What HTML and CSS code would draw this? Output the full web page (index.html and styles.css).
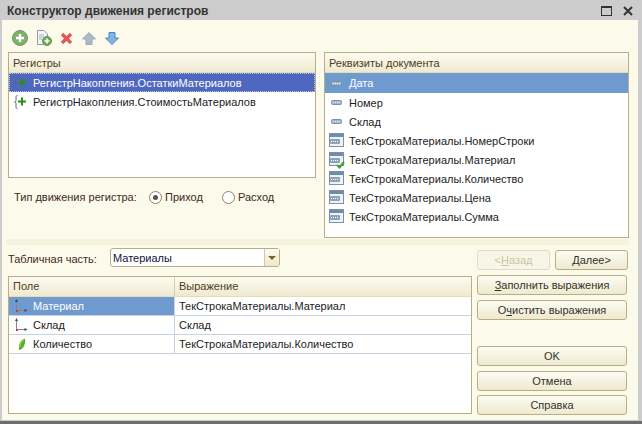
FILE: index.html
```html
<!DOCTYPE html>
<html lang="ru">
<head>
  <meta charset="UTF-8">
  <title>Конструктор движения регистров</title>
  <link rel="stylesheet" href="styles.css">
</head>
<body>
<svg class="defs" width="0" height="0">
  <symbol id="i-attr" viewBox="0 0 11 5">
    <rect x="0.5" y="0.5" width="10" height="4" rx="1" fill="#9fb5ca" stroke="#7c93aa"/>
    <path d="M2 2.5h1M4 2.5h1M6 2.5h1M8 2.5h1" stroke="#eef4f9" stroke-width="1"/>
  </symbol>
  <symbol id="i-tab" viewBox="0 0 15 15">
    <rect x="0.5" y="0.5" width="14" height="13" fill="#eef3f8" stroke="#7d92a8"/>
    <rect x="1" y="1" width="13" height="3" fill="#6f8dab"/>
    <rect x="1" y="6" width="10" height="5" rx="1" fill="#8ea3b8"/>
    <path d="M2 8.5h1M4 8.5h1M6 8.5h1M8 8.5h1" stroke="#fff"/>
  </symbol>
  <symbol id="i-reg" viewBox="0 0 14 14">
    <path d="M3.5 0.5C2 0.5 2 1.5 2 3V5.5C2 6.5 1.5 7 0.5 7C1.5 7 2 7.5 2 8.5V11C2 12.5 2 13.5 3.5 13.5" fill="none" stroke="#5a6b80"/>
    <path d="M8 2.5V10.5M4 6.5H12" stroke="#2f8a17" stroke-width="2"/>
  </symbol>
  <symbol id="i-dim" viewBox="0 0 14 16">
    <path d="M2.5 3V12.5H11" fill="none" stroke="#80878f"/>
    <path d="M1 4L2.5 1L4 4ZM10.5 11L13.5 12.5L10.5 14Z" fill="#3f4852"/>
    <rect x="2" y="12" width="2" height="2" fill="#e0352b"/>
  </symbol>
</svg>

<div class="window">
  <div class="titlebar">
    <span class="title">Конструктор движения регистров</span>
    <span class="win-btn win-max"></span>
    <svg class="win-close" width="10" height="10" viewBox="0 0 10 10"><path d="M1 1L9 9M9 1L1 9" stroke="#333" stroke-width="2"/></svg>
  </div>

  <div class="client">
    <div class="top">
      <div class="left-col">
        <div class="toolbar">
          <svg width="16" height="16" viewBox="0 0 16 16">
            <circle cx="8" cy="8" r="7.5" fill="#7db368" stroke="#7a8f72"/>
            <path d="M8 4V12M4 8H12" stroke="#fff" stroke-width="2.4"/>
          </svg>
          <svg width="16" height="16" viewBox="0 0 16 16">
            <path d="M1.5 0.5H8L11.5 4V14.5H1.5Z" fill="#f2f5f8" stroke="#8d9aa8"/>
            <path d="M3 5H8M3 7H8M3 9H6" stroke="#a9b4bf"/>
            <circle cx="11" cy="11" r="4.5" fill="#6fae58" stroke="#5f8f50"/>
            <path d="M11 8.5V13.5M8.5 11H13.5" stroke="#fff" stroke-width="1.6"/>
          </svg>
          <svg class="tool-x" width="13" height="13" viewBox="0 0 13 13"><path d="M2 2L11 11M11 2L2 11" stroke="#e2595a" stroke-width="3.4"/></svg>
          <svg class="tool-up" width="14" height="13" viewBox="0 0 14 13"><path d="M7 0.5L13.5 7H10V12.5H4V7H0.5Z" fill="#a9bac6" stroke="#98a9b6"/></svg>
          <svg class="tool-down" width="14" height="13" viewBox="0 0 14 13"><path d="M7 12.5L13.5 6H10V0.5H4V6H0.5Z" fill="#7fb4e0" stroke="#4f86b8"/></svg>
        </div>

        <div class="list list-regs">
          <div class="list-head">Регистры</div>
          <div class="row row-reg row-focus"><svg class="icon-reg"><use href="#i-reg"/></svg>РегистрНакопления.ОстаткиМатериалов</div>
          <div class="row row-reg"><svg class="icon-reg"><use href="#i-reg"/></svg>РегистрНакопления.СтоимостьМатериалов</div>
        </div>

        <div class="move-type">
          <span class="move-label">Тип движения регистра:</span>
          <span class="radio radio-on"></span><span class="radio-text">Приход</span>
          <span class="radio radio-second"></span><span class="radio-text">Расход</span>
        </div>
      </div>

      <div class="list list-attrs">
        <div class="list-head">Реквизиты документа</div>
        <div class="row row-attr row-active"><span class="slot"><svg class="icon-attr"><use href="#i-attr"/></svg></span>Дата</div>
        <div class="row row-attr"><span class="slot"><svg class="icon-attr"><use href="#i-attr"/></svg></span>Номер</div>
        <div class="row row-attr"><span class="slot"><svg class="icon-attr"><use href="#i-attr"/></svg></span>Склад</div>
        <div class="row row-attr"><span class="slot"><svg class="icon-tab"><use href="#i-tab"/></svg></span>ТекСтрокаМатериалы.НомерСтроки</div>
        <div class="row row-attr"><span class="slot slot-check"><svg class="icon-tab"><use href="#i-tab"/></svg><svg class="check" width="9" height="8" viewBox="0 0 9 8"><path d="M1 4L3.5 6.5L8 1" fill="none" stroke="#3f9e2c" stroke-width="2"/></svg></span>ТекСтрокаМатериалы.Материал</div>
        <div class="row row-attr"><span class="slot"><svg class="icon-tab"><use href="#i-tab"/></svg></span>ТекСтрокаМатериалы.Количество</div>
        <div class="row row-attr"><span class="slot"><svg class="icon-tab"><use href="#i-tab"/></svg></span>ТекСтрокаМатериалы.Цена</div>
        <div class="row row-attr"><span class="slot"><svg class="icon-tab"><use href="#i-tab"/></svg></span>ТекСтрокаМатериалы.Сумма</div>
      </div>
    </div>

    <div class="splitter"></div>

    <div class="bottom">
      <div class="bottom-left">
        <div class="tab-part">
          <span class="tab-label">Табличная часть:</span>
          <div class="combo">
            <span class="combo-value">Материалы</span>
            <span class="combo-btn"><span class="combo-arrow"></span></span>
          </div>
        </div>
        <div class="grid">
          <div class="grid-head">
            <div class="cell-field">Поле</div>
            <div class="cell-expr">Выражение</div>
          </div>
          <div class="grid-row">
            <div class="cell-field cell-active"><svg class="icon-dim"><use href="#i-dim"/></svg>Материал</div>
            <div class="cell-expr">ТекСтрокаМатериалы.Материал</div>
          </div>
          <div class="grid-row">
            <div class="cell-field"><svg class="icon-dim"><use href="#i-dim"/></svg>Склад</div>
            <div class="cell-expr">Склад</div>
          </div>
          <div class="grid-row">
            <div class="cell-field"><svg class="icon-dim" viewBox="0 0 14 16"><path d="M5 14C4.5 9 6 4 11 2.5C11.5 8 10 13 5 14Z" fill="#58ad24"/><path d="M6 11C6 8 7.5 5 10 4" fill="none" stroke="#a5dc6a"/></svg>Количество</div>
            <div class="cell-expr">ТекСтрокаМатериалы.Количество</div>
          </div>
        </div>
      </div>

      <div class="buttons">
        <div class="nav-buttons">
          <button class="btn btn-nav" disabled>&lt;<u>Н</u>азад</button>
          <button class="btn btn-nav"><u>Д</u>алее&gt;</button>
        </div>
        <button class="btn"><u>З</u>аполнить выражения</button>
        <button class="btn">О<u>ч</u>истить выражения</button>
        <button class="btn btn-ok">OK</button>
        <button class="btn btn-cancel">Отмена</button>
        <button class="btn">Справка</button>
      </div>
    </div>
  </div>
</div>
</body>
</html>
```

FILE: styles.css
```css
* {
  box-sizing: border-box;
}
html, body {
  margin: 0;
  padding: 0;
}
body {
  width: 642px;
  height: 424px;
  overflow: hidden;
  font-family: "Liberation Sans", Arial, sans-serif;
  font-size: 11px;
  color: #1c1c24;
}
.defs {
  display: block;
  height: 0;
}
.window {
  width: 642px;
  height: 424px;
  display: flex;
  flex-direction: column;
  background: #cccccc;
  border-bottom: 3px solid #6e6e6e;
}
/* Заголовок окна */
.titlebar {
  height: 20px;
  flex: none;
  display: flex;
  align-items: center;
  padding: 2px 8px 0 7px;
}
.title {
  flex: 1;
  font-size: 12px;
  font-weight: bold;
  color: #333;
}
.win-max {
  width: 11px;
  height: 10px;
  border: 1px solid #333;
  border-top-width: 2px;
  margin-right: 11px;
}
.win-close {
  margin-right: 1px;
}
.client {
  flex: 1;
  margin: 0 4px 1px 2px;
  background: #fcfaeb;
  display: flex;
  flex-direction: column;
}
/* Верхняя часть */
.top {
  height: 219px;
  flex: none;
  display: flex;
  padding-left: 6px;
  padding-right: 7px;
}
.left-col {
  width: 308px;
  flex: none;
}
.toolbar {
  height: 32px;
  display: flex;
  align-items: center;
  padding: 8px 0 4px 4px;
}
.toolbar svg {
  margin-right: 8px;
}
.tool-up {
  margin-left: 1px;
}
.tool-down {
  margin-left: 1px;
}
.list {
  border: 1px solid #b8ae84;
  background: #fff;
}
.list-regs {
  height: 126px;
}
.list-attrs {
  width: 305px;
  height: 186px;
  margin: 32px 0 0 8px;
}
.list-head {
  height: 20px;
  padding: 3px 4px 0 4px;
  line-height: 15px;
  color: #4b3d24;
  background: linear-gradient(#fdfcf3, #f0e9cf);
  border-bottom: 1px solid #e4dcb8;
}
.row {
  display: flex;
  align-items: center;
  white-space: nowrap;
}
.row-reg {
  height: 19px;
}
.row-attr {
  height: 19px;
}
.row-focus {
  background: #4f68bf;
  color: #fff;
  outline: 1px dotted #b9c4ea;
  outline-offset: -1px;
}
.row-active {
  height: 20px;
  background: #6f9ad0;
  color: #fff;
}
.icon-reg {
  width: 14px;
  height: 14px;
  margin: 0 5px 0 5px;
}
.slot {
  position: relative;
  width: 15px;
  height: 15px;
  margin: 0 5px 0 4px;
  display: flex;
  align-items: center;
  justify-content: center;
}
.icon-attr {
  width: 11px;
  height: 5px;
}
.icon-tab {
  width: 15px;
  height: 15px;
}
.check {
  position: absolute;
  right: -1px;
  bottom: -2px;
}
/* Тип движения */
.move-type {
  display: flex;
  align-items: center;
  height: 14px;
  margin-top: 12px;
  padding-left: 6px;
  color: #3d2a22;
}
.move-label {
  width: 135px;
}
.radio {
  width: 13px;
  height: 13px;
  border-radius: 50%;
  border: 1px solid #8c8468;
  background: #fff;
  margin-right: 3px;
  display: flex;
  align-items: center;
  justify-content: center;
}
.radio-on::after {
  content: "";
  width: 5px;
  height: 5px;
  border-radius: 50%;
  background: #555;
}
.radio-second {
  margin-left: 20px;
}
.radio-text {
  width: 37px;
}
.splitter {
  height: 6px;
  flex: none;
  margin: 0 9px 0 4px;
  background: #f5f2de;
}
/* Нижняя часть */
.bottom {
  flex: 1;
  display: flex;
  padding: 3px 7px 0 6px;
}
.bottom-left {
  width: 464px;
  flex: none;
}
.tab-part {
  display: flex;
  align-items: center;
  height: 19px;
  margin-bottom: 9px;
}
.tab-label {
  width: 102px;
  color: #3d2a22;
  padding-top: 3px;
}
.combo {
  width: 170px;
  height: 19px;
  display: flex;
  border: 1px solid #b8ae84;
  border-radius: 3px;
  background: #fff;
}
.combo-value {
  flex: 1;
  padding: 1px 0 0 2px;
  line-height: 17px;
  color: #12123a;
}
.combo-btn {
  width: 15px;
  display: flex;
  align-items: center;
  justify-content: center;
  border-left: 1px solid #cfc8a6;
  background: linear-gradient(#fdfcf3, #eee7cc);
}
.combo-arrow {
  width: 0;
  height: 0;
  border-left: 4px solid transparent;
  border-right: 4px solid transparent;
  border-top: 4px solid #7a6420;
}
.grid {
  height: 138px;
  border: 1px solid #b8ae84;
  background: #fff;
}
.grid-head, .grid-row {
  display: flex;
}
.grid-head {
  height: 20px;
  line-height: 19px;
  color: #4b3d24;
  background: linear-gradient(#fdfcf3, #f0e9cf);
  border-bottom: 1px solid #e4dcb8;
}
.grid-row {
  height: 19px;
  line-height: 19px;
  border-bottom: 1px solid #c6d3e2;
}
.cell-field {
  width: 166px;
  flex: none;
  display: flex;
  align-items: center;
  padding-left: 4px;
  border-right: 1px solid #c6d3e2;
}
.grid-head .cell-field {
  border-right-color: #d8cfa8;
}
.grid-row .cell-field {
  padding-left: 5px;
}
.cell-expr {
  flex: 1;
  padding-left: 4px;
}
.cell-active {
  background: #6f9ad0;
  color: #fff;
}
.icon-dim {
  width: 14px;
  height: 16px;
  margin-right: 5px;
  flex: none;
}
/* Кнопки */
.buttons {
  display: flex;
  flex-direction: column;
  margin-left: 5px;
  width: 151px;
}
.nav-buttons {
  display: flex;
  gap: 5px;
  width: 151px;
  margin-top: 2px;
  margin-bottom: 5px;
}
.btn {
  height: 20px;
  width: 150px;
  padding: 0;
  margin-bottom: 5px;
  font: inherit;
  color: #33332a;
  border: 1px solid #b8ae84;
  border-radius: 3px;
  background: linear-gradient(#fdfcf3, #efe9d0);
}
.btn-nav {
  width: 73px;
  margin-bottom: 0;
}
.btn:disabled {
  color: #cdc4a0;
  border-color: #e0dbc2;
  background: #f8f6e6;
}
.btn-ok {
  margin-top: 21px;
}
.btn-cancel {
  margin-bottom: 4px;
}
```
